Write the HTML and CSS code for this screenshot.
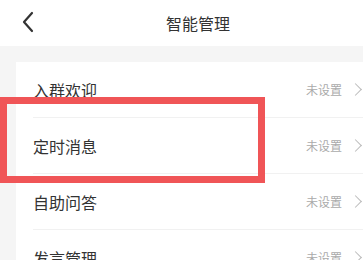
FILE: index.html
```html
<!DOCTYPE html>
<html lang="zh-CN">
<head>
    <meta charset="UTF-8">
    <title>智能管理</title>
    <link rel="stylesheet" href="styles.css">
</head>
<body>
<div id="page">
    <div id="header">
        <svg class="back" width="14" height="22" viewBox="0 0 14 22">
            <polyline points="11,2 3,11 11,20" fill="none" stroke="#333" stroke-width="2.2" stroke-linecap="round" stroke-linejoin="round"/>
        </svg>
        <div class="title">智能管理</div>
    </div>
    <ul id="list">
        <li>
            <span class="name">入群欢迎</span>
            <span class="state">未设置</span>
            <span class="arrow"></span>
        </li>
        <li>
            <span class="name">定时消息</span>
            <span class="state">未设置</span>
            <span class="arrow"></span>
        </li>
        <li>
            <span class="name">自助问答</span>
            <span class="state">未设置</span>
            <span class="arrow"></span>
        </li>
        <li>
            <span class="name">发言管理</span>
            <span class="state">未设置</span>
            <span class="arrow"></span>
        </li>
    </ul>
    <div id="mark"></div>
</div>
</body>
</html>
```

FILE: styles.css
```css
html, body, ul {
    margin: 0;
    padding: 0;
}
body {
    width: 363px;
    height: 260px;
    overflow: hidden;
    background: #f5f5f5;
    font-family: "Noto Sans CJK SC", "Noto Sans", sans-serif;
}
li {
    list-style: none;
}
#page {
    position: relative;
    width: 396px;
}
#header {
    position: relative;
    height: 46px;
    background: #fff;
    display: flex;
    align-items: center;
    justify-content: center;
}
#header .back {
    position: absolute;
    left: 21px;
    top: 11px;
}
#header .title {
    font-size: 16px;
    color: #333;
    margin-top: -1px;
}
#list {
    margin: 16px 0 0 16px;
    background: #fff;
}
#list li {
    height: 56px;
    margin-left: 17px;
    padding-right: 36px;
    display: flex;
    align-items: center;
    border-bottom: 1px solid #f1f1f1;
    box-sizing: border-box;
}
#list .name {
    flex: 1;
    font-size: 16px;
    color: #333;
}
#list .state {
    font-size: 12px;
    color: #aaa;
}
#list .arrow {
    width: 8px;
    height: 8px;
    margin-left: 9px;
    border-top: 1.5px solid #bbb;
    border-right: 1.5px solid #bbb;
    transform: rotate(45deg);
}
#mark {
    position: absolute;
    left: 0;
    top: 97px;
    width: 265px;
    height: 86px;
    border: 7px solid #f05557;
    box-sizing: border-box;
}
```
